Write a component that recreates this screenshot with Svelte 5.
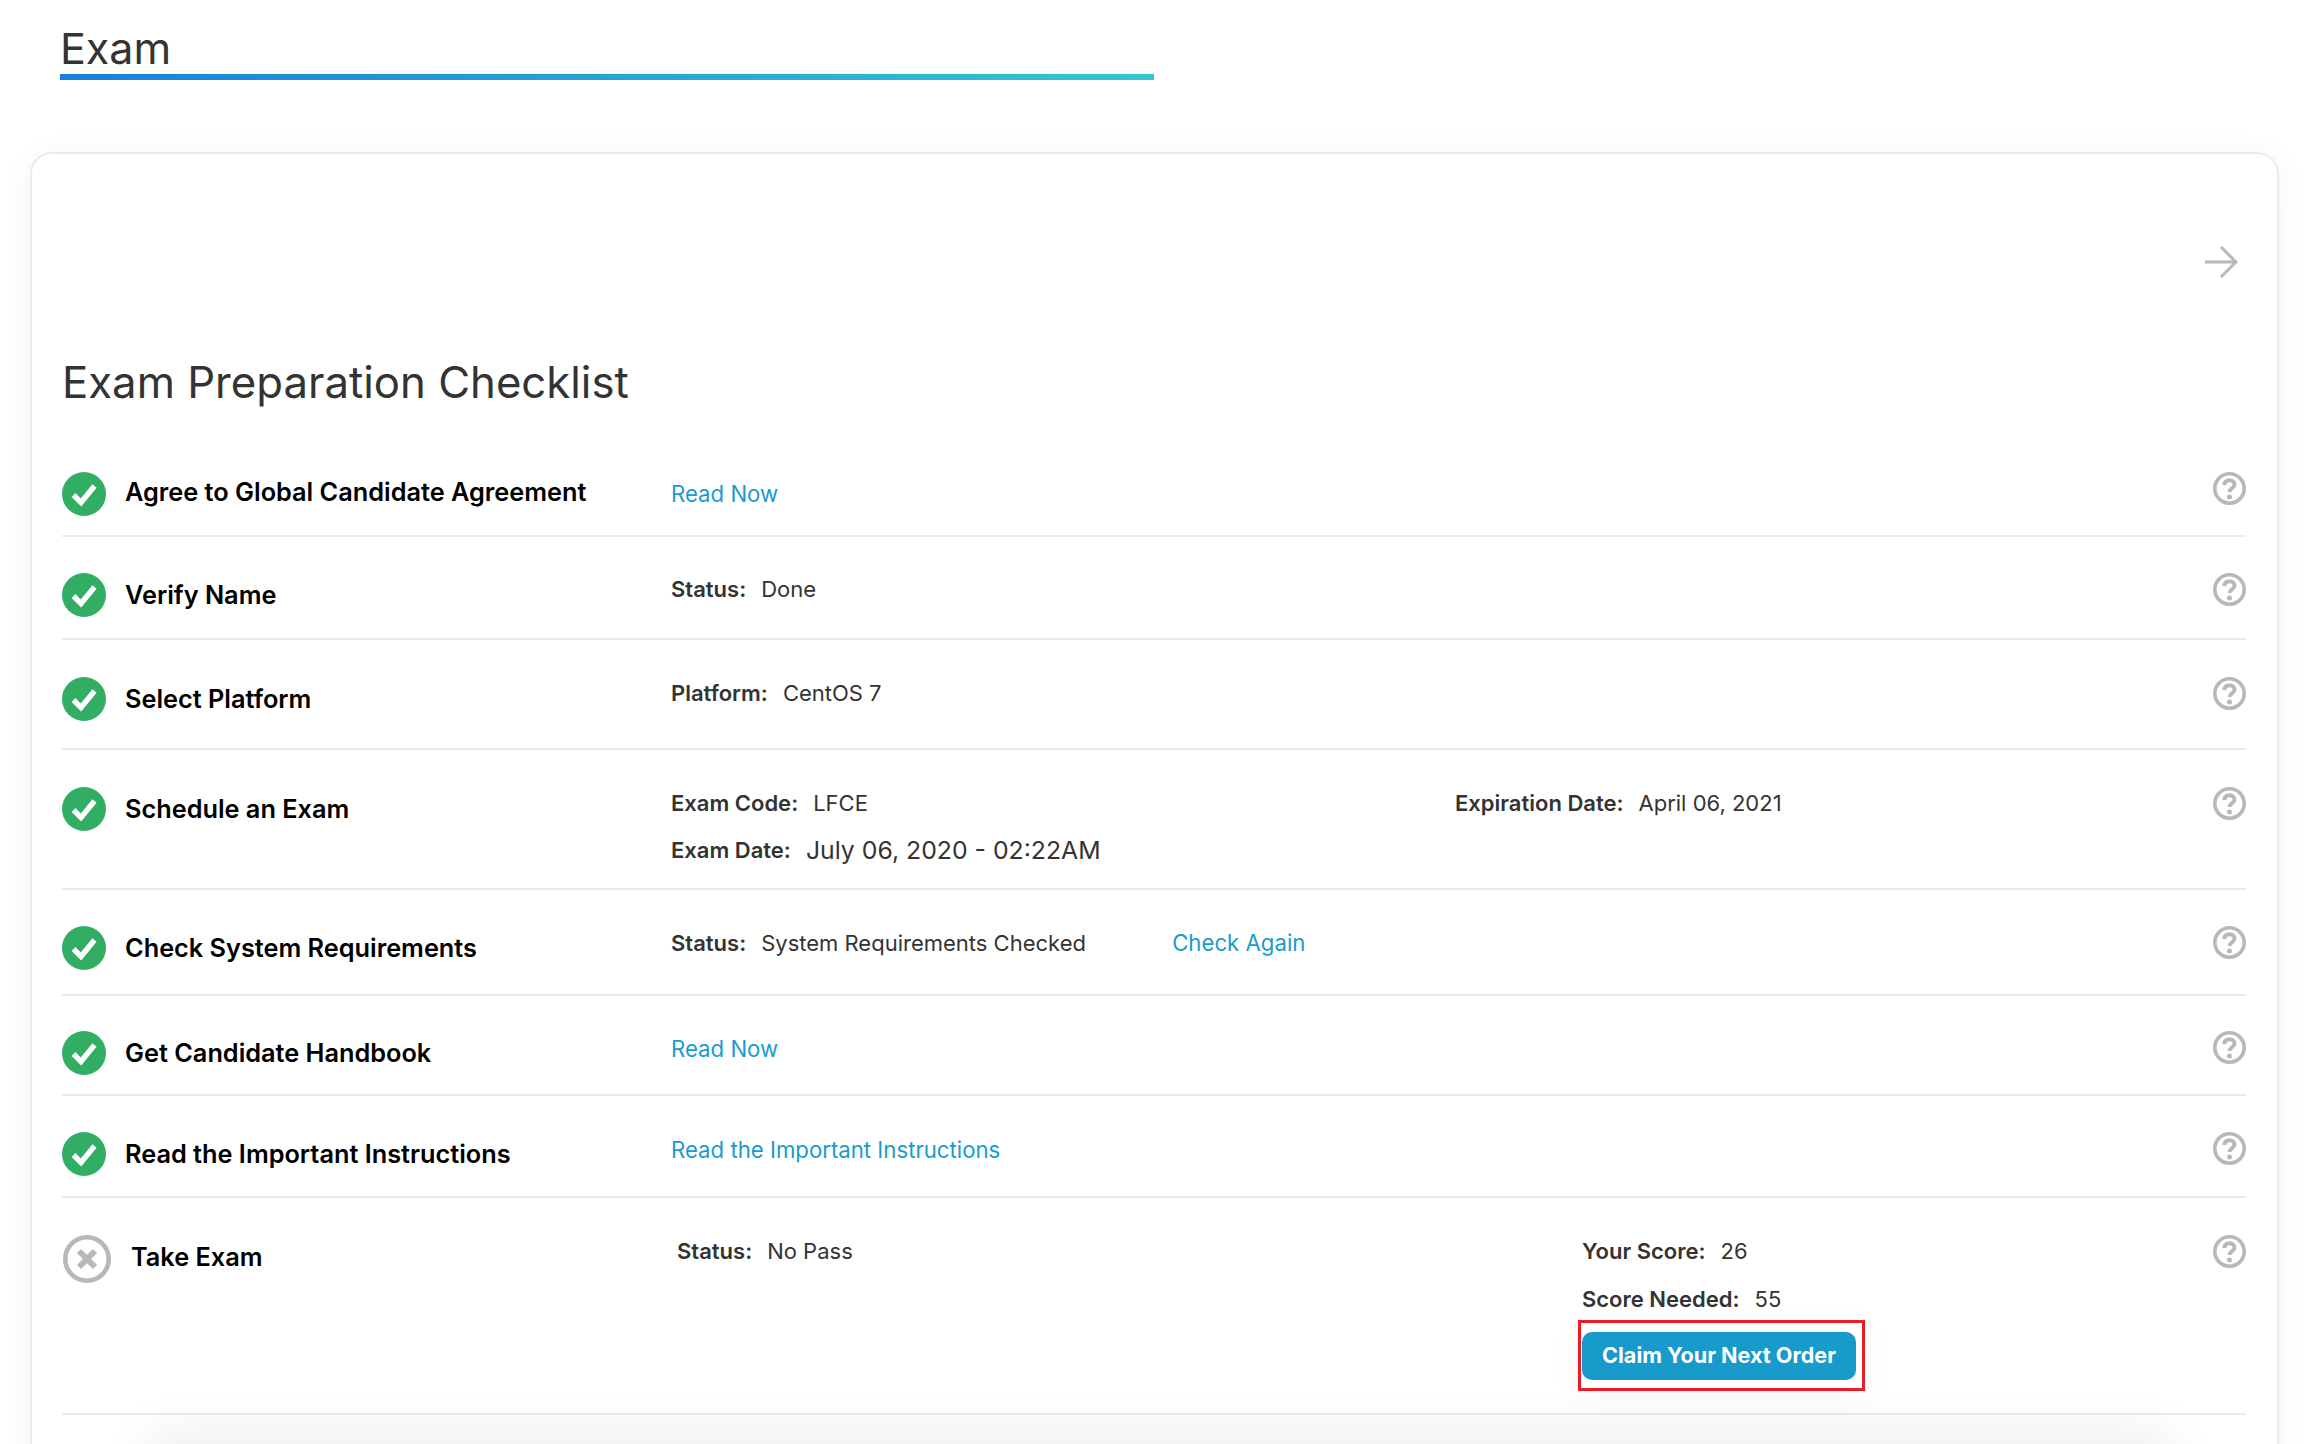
<script>
  const rows = [
    { name: 'Agree to Global Candidate Agreement', key: 'agree', link: 'Read Now' },
    { name: 'Verify Name', key: 'verify', pairs: [['Status:', 'Done']] },
    { name: 'Select Platform', key: 'platform', pairs: [['Platform:', 'CentOS 7']] },
    { name: 'Schedule an Exam', key: 'schedule' },
    { name: 'Check System Requirements', key: 'system' },
    { name: 'Get Candidate Handbook', key: 'handbook', link: 'Read Now' },
    { name: 'Read the Important Instructions', key: 'instructions', link: 'Read the Important Instructions' }
  ];
</script>

{#snippet help()}
  <svg class="help" viewBox="0 0 33 33" fill="none" aria-label="Help">
    <circle cx="16.5" cy="16.5" r="14.7" stroke="#b8b8b8" stroke-width="3.6" />
    <path d="M11.200 13c.3-3 2.500-4.700 5.300-4.700 2.900 0 5 1.800 5 4.300 0 3.900-5 3.700-5 7.300" stroke="#b8b8b8" stroke-width="4" />
    <circle cx="16.500" cy="25" r="2.500" fill="#b8b8b8" />
  </svg>
{/snippet}

{#snippet check()}
  <svg class="mark" viewBox="0 0 44 44" aria-hidden="true">
    <circle cx="22" cy="22" r="22" fill="#32ae64" />
    <path d="M11.500 23l7.500 7.500L32.500 14" fill="none" stroke="#fff" stroke-width="5.400" />
  </svg>
{/snippet}

<div class="page">
  <header class="title">
    <h1>Exam</h1>
    <div class="underline"></div>
  </header>

  <section class="card">
    <div class="arrow-bar">
      <svg class="arrow" viewBox="0 0 34 34" fill="none" aria-label="Next">
        <path d="M1 16h31M17 1l15 15-15 15" stroke="#b8b8b8" stroke-width="3" />
      </svg>
    </div>
    <h2>Exam Preparation Checklist</h2>

    <ul class="list">
      {#each rows as row}
        <li class="row {row.key}">
          {@render check()}
          <div class="name">{row.name}</div>
          <div class="detail">
            {#if row.link}
              <a class="link" href="#top">{row.link}</a>
            {:else if row.pairs}
              {#each row.pairs as [label, value]}
                <div class="pair"><b>{label}</b><span>{value}</span></div>
              {/each}
            {:else if row.key === 'schedule'}
              <div class="columns">
                <div class="pair code"><b>Exam Code:</b><span>LFCE</span></div>
                <div class="pair"><b>Expiration Date:</b><span>April 06, 2021</span></div>
              </div>
              <div class="pair date"><b>Exam Date:</b><span>July 06, 2020 - 02:22AM</span></div>
            {:else}
              <div class="pair">
                <b>Status:</b><span class="checked">System Requirements Checked</span>
                <a class="link" href="#top">Check Again</a>
              </div>
            {/if}
          </div>
          {@render help()}
        </li>
      {/each}

      <li class="row take">
        <svg class="mark cross" viewBox="0 0 48 48" fill="none" aria-hidden="true">
          <circle cx="24" cy="24" r="21.700" stroke="#b8b8b8" stroke-width="4.600" />
          <path d="M16 16l16 16M32 16L16 32" stroke="#b8b8b8" stroke-width="6" />
        </svg>
        <div class="name">Take Exam</div>
        <div class="detail result">
          <div class="pair"><b>Status:</b><span>No Pass</span></div>
          <div class="score">
            <div class="pair"><b>Your Score:</b><span>26</span></div>
            <div class="pair needed"><b>Score Needed:</b><span>55</span></div>
            <div class="highlight">
              <button type="button">Claim Your Next Order</button>
            </div>
          </div>
        </div>
        {@render help()}
      </li>
    </ul>
  </section>

  <div class="footer-shadow"></div>
</div>

<style>
  :global(body) {
    margin: 0;
    background: #fff;
  }

  .page {
    position: relative;
    height: 1444px;
    overflow: hidden;
    font-family: Inter, "Liberation Sans", sans-serif;
    color: #333;
  }

  .title {
    width: 1094px;
    margin-left: 60px;
    padding-top: 22px;
  }

  h1 {
    margin: 0;
    font-size: 43px;
    font-weight: 400;
    line-height: 52px;
  }

  .underline {
    height: 6px;
    background: linear-gradient(90deg, #1a7fdb, #34c6cf);
  }

  .card {
    height: 1400px;
    margin: 72px 31px 0 30px;
    padding: 0 31px 0 30px;
    background: #fff;
    border: 2px solid #ebebeb;
    border-radius: 22px;
    box-shadow: 0 4px 32px rgba(0, 0, 0, 0.05);
  }

  .arrow-bar {
    display: flex;
    justify-content: flex-end;
    padding-top: 92px;
    padding-right: 8px;
  }

  .arrow {
    width: 34px;
    height: 34px;
  }

  h2 {
    margin: 76px 0 0;
    font-size: 43.7px;
    font-weight: 400;
    line-height: 54px;
    color: #333;
  }

  .list {
    margin: 0;
    padding: 0;
    list-style: none;
  }

  .row {
    display: flex;
    align-items: flex-start;
    border-bottom: 2px solid #ebebeb;
    padding: 36px 0 21px;
  }

  .agree { padding-top: 62px; padding-bottom: 19px; }
  .platform { padding-top: 37px; padding-bottom: 27px; }
  .schedule { padding-top: 37px; padding-bottom: 22px; }
  .system { padding-top: 36px; padding-bottom: 24px; }
  .handbook { padding-top: 35px; padding-bottom: 19px; }
  .instructions { padding-top: 36px; padding-bottom: 20px; }
  .take { padding-top: 37px; padding-bottom: 22px; }

  .mark {
    flex: none;
    width: 44px;
    height: 44px;
    margin-right: 19px;
  }

  .cross {
    width: 48px;
    height: 48px;
    margin: 0 20px 0 1px;
  }

  .name {
    flex: none;
    width: 546px;
    margin-top: 2px;
    font-size: 25.3px;
    font-weight: 600;
    line-height: 40px;
    color: #000;
  }

  .agree .name {
    margin-top: 0;
  }

  .detail {
    flex: 1;
    font-size: 22px;
    line-height: 32px;
  }

  .agree .detail { margin-top: 6px; }
  .system .detail { margin-top: 1px; }
  .handbook .detail,
  .instructions .detail { margin-top: 2px; }

  .pair {
    display: flex;
    white-space: nowrap;
  }

  .pair b {
    font-weight: 600;
    margin-right: 15px;
  }

  .columns {
    display: flex;
  }

  .code {
    width: 784px;
  }

  .date {
    margin-top: 15px;
  }

  .date span {
    font-size: 24.8px;
  }

  .checked {
    width: 411px;
  }

  .link {
    color: #1a9bcf;
    text-decoration: none;
    font-size: 22.2px;
  }

  .result {
    display: flex;
  }

  .result > .pair {
    width: 905px;
  }

  .score {
    display: flex;
    flex-direction: column;
  }

  .needed {
    margin-top: 16px;
  }

  .highlight {
    width: 274px;
    margin: 5px 0 0 -4px;
    padding: 9px 6px 8px 1px;
    border: 3px solid #ed1c24;
    box-shadow: 0 6px 36px rgba(0, 0, 0, 0.04);
  }

  button {
    display: block;
    width: 274px;
    height: 48px;
    padding: 0 0 2px;
    border: none;
    border-radius: 10px;
    background: #189acb;
    color: #fff;
    font: 700 21.6px/46px Inter, "Liberation Sans", sans-serif;
  }

  .help {
    flex: none;
    width: 33px;
    height: 33px;
  }

  .footer-shadow {
    position: absolute;
    left: 160px;
    right: 150px;
    bottom: -40px;
    height: 40px;
    box-shadow: 0 0 50px 12px rgba(0, 0, 0, 0.07);
  }
</style>
